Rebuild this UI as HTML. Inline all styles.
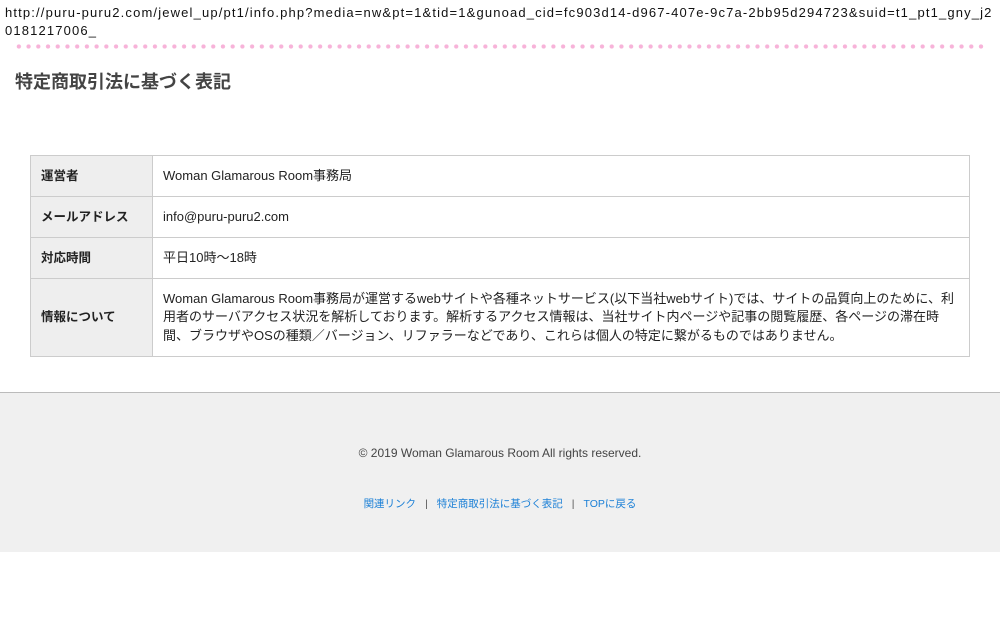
<!DOCTYPE html>
<html><head><meta charset="utf-8"><style>
*{margin:0;padding:0;box-sizing:border-box}
body{width:1000px;height:640px;background:#fff;font-family:"Liberation Sans","Noto Sans CJK JP",sans-serif;color:#222;position:relative;overflow:hidden}
.url{position:absolute;left:5px;top:4px;width:995px;font-size:13px;line-height:18px;color:#111;letter-spacing:1.15px;white-space:nowrap}
.dots{position:absolute;left:14px;top:44px;width:972px;height:5px;background:radial-gradient(circle,#f7b3d9 2px,transparent 2.3px) 0 0/9.72px 5px repeat-x}
h1{position:absolute;left:15px;top:68px;font-size:18px;font-weight:bold;color:#444}
table{position:absolute;left:30px;top:155px;width:940px;border-collapse:collapse;font-size:13px}
td{border:1px solid #ccc;padding:0 10px;line-height:18.5px}
td.l{width:122px;background:#eee;font-weight:bold;font-size:12.5px}
.footer{position:absolute;left:0;top:392px;width:1000px;height:160px;background:#f0f0f0;border-top:1px solid #bbb;text-align:center}
.copy{position:absolute;top:53px;width:100%;font-size:12px;color:#444}
.links{position:absolute;top:103px;width:100%;font-size:10.5px;color:#1a7fd6}
.links span.s{color:#555;margin:0 9px}
</style></head><body>
<div class="url">http://puru-puru2.com/jewel_up/pt1/info.php?media=nw&amp;pt=1&amp;tid=1&amp;gunoad_cid=fc903d14-d967-407e-9c7a-2bb95d294723&amp;suid=t1_pt1_gny_j2<br>0181217006_</div>
<div class="dots"></div>
<h1>特定商取引法に基づく表記</h1>
<table>
<tr style="height:41px"><td class="l">運営者</td><td>Woman Glamarous Room事務局</td></tr>
<tr style="height:41px"><td class="l">メールアドレス</td><td>info@puru-puru2.com</td></tr>
<tr style="height:41px"><td class="l">対応時間</td><td>平日10時～18時</td></tr>
<tr style="height:78px"><td class="l">情報について</td><td>Woman Glamarous Room事務局が運営するwebサイトや各種ネットサービス(以下当社webサイト)では、サイトの品質向上のために、利<br>用者のサーバアクセス状況を解析しております。解析するアクセス情報は、当社サイト内ページや記事の閲覧履歴、各ページの滞在時<br>間、ブラウザやOSの種類／バージョン、リファラーなどであり、これらは個人の特定に繋がるものではありません。</td></tr>
</table>
<div class="footer">
<div class="copy">© 2019 Woman Glamarous Room All rights reserved.</div>
<div class="links">関連リンク<span class="s">|</span>特定商取引法に基づく表記<span class="s">|</span>TOPに戻る</div>
</div>
</body></html>
